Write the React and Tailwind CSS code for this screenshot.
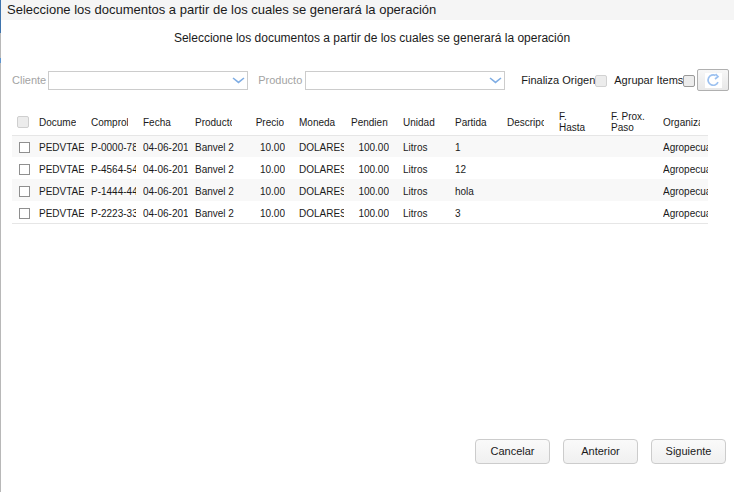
import React from 'react';

const rows = [
  { comp: 'P-0000-78', partida: '1' },
  { comp: 'P-4564-54', partida: '12' },
  { comp: 'P-1444-44', partida: 'hola' },
  { comp: 'P-2223-33', partida: '3' },
];

const headers = ['Documento', 'Comprobante', 'Fecha', 'Producto'];
const headersMid = ['Unidad', 'Partida', 'Descripción'];

function Combo({ label, gap }) {
  return (
    <div className="flex items-center">
      <span className={`mt-[1px] text-[11px] text-[#a3a3a3] ${gap}`}>{label}</span>
      <div className="flex h-[19px] w-[200px] items-center justify-end border border-[#cccccc] bg-white pr-[2px]">
        <svg width="13" height="7" viewBox="0 0 13 7" fill="none" stroke="#7fade4" strokeWidth="1.6">
          <path d="M1 1l5.5 4.4L12 1" />
        </svg>
      </div>
    </div>
  );
}

function Check({ className }) {
  return <div className={`h-[12px] w-[12px] rounded-[2px] border bg-[#ececec] ${className}`} />;
}

function RowCheck() {
  return <div className="ml-[7px] mt-[2px] h-[11px] w-[11px] border border-[#8f8f8f] bg-white" />;
}

function Th({ children, right }) {
  return (
    <th className={`pl-[4px] pt-[3px] font-normal ${right ? 'text-right' : 'text-left'}`}>
      <div className="w-[37px] overflow-hidden whitespace-nowrap">{children}</div>
    </th>
  );
}

function Td({ children, right }) {
  return (
    <td className={`pl-[4px] pt-[2px] ${right ? 'text-right' : 'text-left'}`}>
      <div className={`overflow-hidden whitespace-nowrap ${right ? 'w-[38px]' : 'w-[45px]'}`}>{children}</div>
    </td>
  );
}

export default function App() {
  return (
    <div className="flex h-[492px] w-[734px] overflow-hidden bg-white font-['Liberation_Sans',sans-serif] text-[#1a1a1a]">
      <div className="flex w-px flex-col bg-[#b8b8b8]">
        <div className="h-[33px] bg-[#3f74ad]" />
        <div className="mt-[25px] h-[5px] bg-[#5c94d0]" />
      </div>

      <div className="flex-1">
        <div className="h-[20px] bg-[#f5f5f5] pl-[6px] text-[13px] leading-[19px]">
          Seleccione los documentos a partir de los cuales se generará la operación
        </div>

        <div className="mt-[10px] pl-[9px] text-center text-[12px] leading-[17px]">
          Seleccione los documentos a partir de los cuales se generará la operación
        </div>

        <div className="mt-[22px] flex h-[22px] items-center pl-[11px]">
          <Combo label="Cliente" gap="mr-[2px]" />
          <div className="ml-[10px]">
            <Combo label="Producto" gap="mr-[3px]" />
          </div>
          <span className="ml-[16px] text-[11px]">Finaliza Origen</span>
          <Check className="mt-[2px] border-[#d2d2d2]" />
          <span className="ml-[7px] text-[11px]">Agrupar Items</span>
          <Check className="mt-[2px] border-[#9a9a9a]" />
          <button className="ml-[2px] flex h-[22px] w-[32px] items-center justify-center rounded-[2px] border border-[#b0b0b0] bg-gradient-to-b from-[#f7f7f7] to-[#e8e8e8]">
            <span className="flex h-[15px] w-[17px] items-center justify-center bg-white">
              <svg width="14" height="14" viewBox="0 0 14 14" fill="none" stroke="#9cc1f0" strokeWidth="1.7">
                <path d="M12 9.2A5.2 5.2 0 1 1 9.6 2.4" />
                <path d="M9.6 1l2.4 2.6L9 6" />
              </svg>
            </span>
          </button>
        </div>

        <div className="ml-[11px] mt-[16px] w-[696px] overflow-hidden border-b border-[#e6e6e6]">
          <table className="w-[699px] table-fixed border-collapse text-[10px]">
            <colgroup>
              <col className="w-[23px]" />
              {Array.from({ length: 13 }).map((_, i) => (
                <col key={i} className="w-[52px]" />
              ))}
            </colgroup>
            <thead>
              <tr className="h-[28px] border-b border-[#e6e6e6] leading-[11px]">
                <th className="pl-[5px] pt-[2px]"><Check className="border-[#cfcfcf]" /></th>
                {headers.map((h) => <Th key={h}>{h}</Th>)}
                <Th right>Precio</Th>
                <Th>Moneda</Th>
                <Th right>Pendiente</Th>
                {headersMid.map((h) => <Th key={h}>{h}</Th>)}
                <Th>F.<br />Hasta</Th>
                <Th>F. Prox.<br />Paso</Th>
                <Th>Organización</Th>
              </tr>
            </thead>
            <tbody>
              {rows.map((row, i) => (
                <tr key={row.comp} className={`h-[22px] ${i % 2 === 0 ? 'bg-[#f8f8f8]' : 'bg-white'}`}>
                  <td><RowCheck /></td>
                  <Td>PEDVTAEXP</Td>
                  <Td>{row.comp}</Td>
                  <Td>04-06-2015</Td>
                  <Td>Banvel 2</Td>
                  <Td right>10.00</Td>
                  <Td>DOLARES</Td>
                  <Td right>100.00</Td>
                  <Td>Litros</Td>
                  <Td>{row.partida}</Td>
                  <Td />
                  <Td />
                  <Td />
                  <Td>Agropecuaria</Td>
                </tr>
              ))}
            </tbody>
          </table>
        </div>

        <div className="mt-[215px] flex justify-end gap-[13px] pr-[8px]">
          {['Cancelar', 'Anterior', 'Siguiente'].map((label) => (
            <button
              key={label}
              className="h-[25px] w-[75px] rounded-[4px] border border-[#cccccc] bg-gradient-to-b from-[#fafafa] to-[#f0f0f0] text-[11px] leading-[21px]"
            >
              {label}
            </button>
          ))}
        </div>
      </div>
    </div>
  );
}
